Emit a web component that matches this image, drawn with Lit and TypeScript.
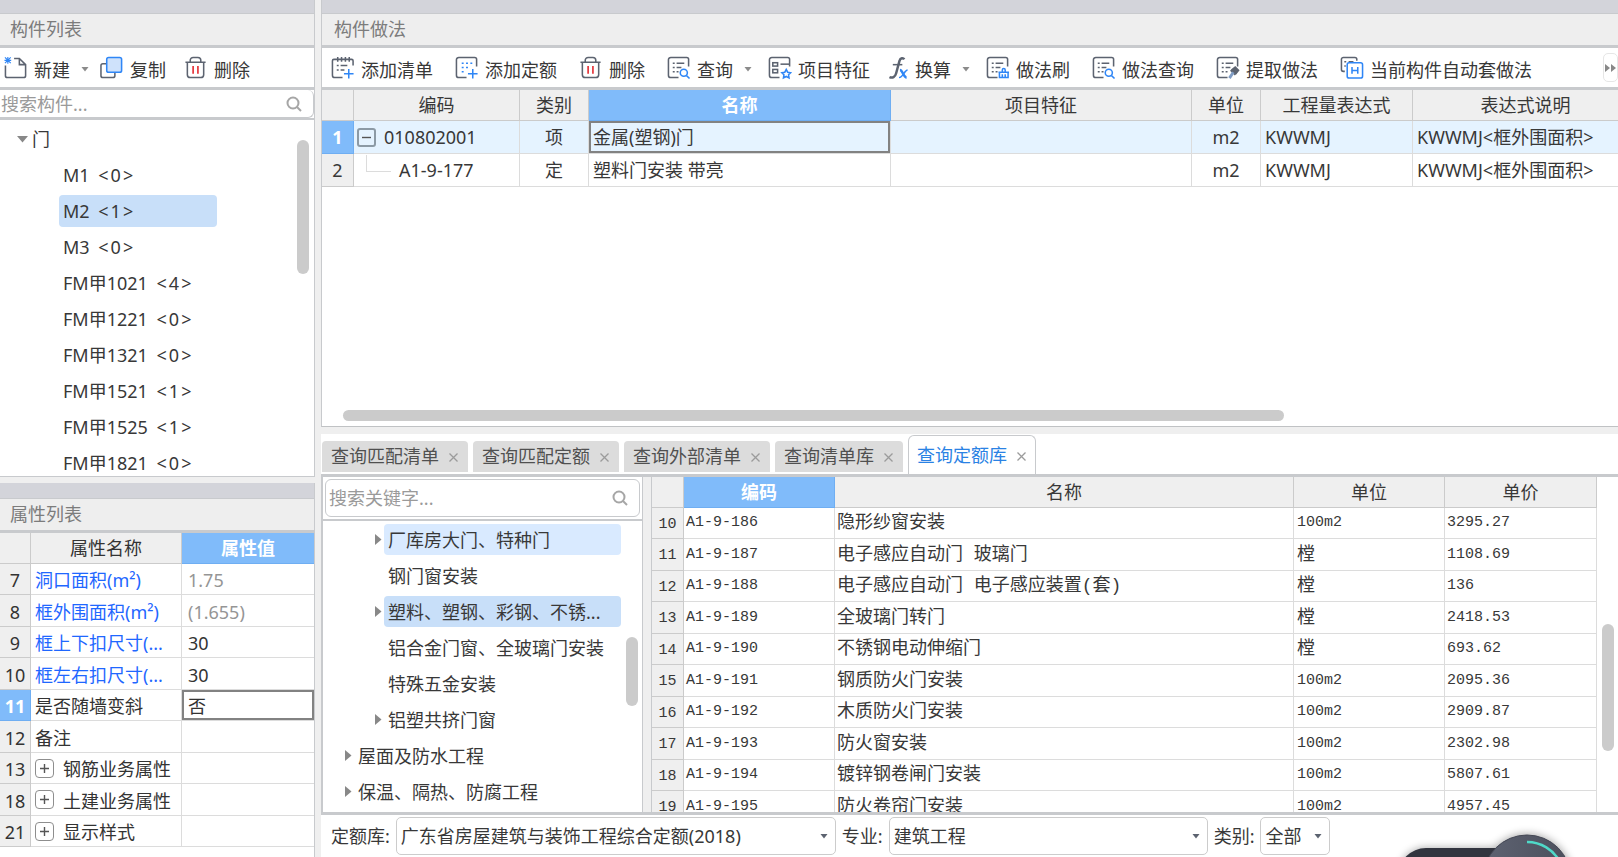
import { LitElement, html, css, svg, nothing } from "lit";
import { customElement, state } from "lit/decorators.js";
import { classMap } from "lit/directives/class-map.js";

const frame = svg`<path d="M12 22.500H4a2.500 2.500 0 0 1-2.500-2.500V4A2.500 2.500 0 0 1 4 1.500h16.500a2 2 0 0 1 2 2V11"/>`;
const lines = svg`<path d="M6 7.500h2M10 7.500h8M6 12h2M10 12h5M6 16.500h2M10 16.500h2"/>`;

const icons: Record<string, unknown> = {
  create: svg`<path d="M10.500 2.500H16l6.500 6.500v11.500a2 2 0 0 1-2 2H3.500a2 2 0 0 1-2-2V10M16 2.500V9h6.500"/>
    <g class="blue thin"><path d="M4 1v7M.500 4.500h7M1 1.500l6 6M7 1.500l-6 6"/></g>`,
  copy: svg`<path d="M7 8H3a2 2 0 0 0-2 2v10.500a2 2 0 0 0 2 2h10.500a2 2 0 0 0 2-2V17"/>
    <rect class="blue pale" x="7" y="1.500" width="15.500" height="15.500" rx="2"/>`,
  remove: svg`<path d="M1.500 6.500h21M6.500 6V4.500a3 3 0 0 1 3-3h5a3 3 0 0 1 3 3V6M3.500 7v12.500a3 3 0 0 0 3 3h11a3 3 0 0 0 3-3V7"/>
    <path class="red" d="M9.500 10.500v8M14.500 10.500v8"/>`,
  addList: svg`<path d="M4 3.500H3a1.500 1.500 0 0 0-1.500 1.500v15A2.500 2.500 0 0 0 4 22.500h8M20 3.500h1.500A1.500 1.500 0 0 1 23 5v5M7 1v5M11 1v5M15 1v5M19 1v5M4 3.500h16"/>
    <path d="M6 10h2M10 10h7M6 14.500h2M10 14.500h4"/>
    <path class="blue" d="M18.500 13.500v10M13.500 18.500h10"/>`,
  addQuota: svg`${frame}<path class="blue" d="M7 7.500h2M11.500 7.500h2M16 7.500h2M7 12h2M11.500 12h2M7 16.500h2"/>
    <path class="blue" d="M18.500 13.500v10M13.500 18.500h10"/>`,
  search: svg`${frame}${lines}<circle class="blue" cx="17.500" cy="17.500" r="3.700"/><path class="blue" d="M20.300 20.500l3.200 3"/>`,
  feature: svg`${frame}<rect x="5" y="7" width="5" height="3.500"/><rect x="5" y="14" width="5" height="3.500"/><path d="M13 8.500h9"/>
    <path class="blue" d="M19 14l1.500 2.900 3.100.500-2.200 2.200.500 3.200-2.900-1.500-2.900 1.500.500-3.200-2.200-2.200 3.100-.500z"/>`,
  formula: svg`<path class="bold" d="M20 3.500c-1-2-4-2-5 1.500L11.500 18c-1 4-4 5.500-7 4"/><path d="M8 9h10"/>
    <path class="blue bold" d="M15.500 14.500c3 0 3.500 8 7 8"/><path class="blue" d="M23.500 14.500c-3 0-5 8-9 8"/>`,
  brush: svg`${frame}${lines}<path class="blue" d="M14 17v5.500h9V17zM13 17h11M17 16.500v-2a1.500 1.500 0 0 1 3 0v2M17 19v3.500M20 19v3.500"/>`,
  extract: svg`${frame}${lines}<path class="fill" d="M17 14l3-2.500 3.500 3.500-2.500 3z"/><path class="bold" d="M15.500 14.500l5 5"/><path class="steel" d="M18 17l-4 6"/>`,
  auto: svg`<path d="M5 16H3.500a2 2 0 0 1-2-2V3.500a2 2 0 0 1 2-2h12a2 2 0 0 1 2 2V5M4.500 6h2M9 6h5M4.500 10.500H6"/>
    <rect class="blue" x="7.500" y="7" width="16" height="16" rx="2"/><path class="blue" d="M12.500 11.500v7M18.500 11.500v7M12.500 15h6"/>`,
};

const icon = (name: string) => {
  const slim = name === "formula";
  return html`<svg class=${slim ? "icon slim" : "icon"} viewBox=${slim ? "4 0 21 25" : "0 0 25 25"} aria-hidden="true">${icons[name]}</svg>`;
};
const caret = html`<svg class="caret" viewBox="0 0 8 5" aria-hidden="true"><path d="M.500 0h7L4 4.500z" /></svg>`;
const lens = html`<svg class="lens" viewBox="0 0 16 16" aria-hidden="true"><circle cx="7" cy="7" r="5.500" /><path d="M11 11l4 4" /></svg>`;

const tools: [string, string, boolean?][] = [
  ["addList", "添加清单"], ["addQuota", "添加定额"], ["remove", "删除"], ["search", "查询", true],
  ["feature", "项目特征"], ["formula", "换算", true], ["brush", "做法刷"], ["search", "做法查询"],
  ["extract", "提取做法"], ["auto", "当前构件自动套做法"],
];

const parts: [string, number][] = [
  ["M1", 0], ["M2", 1], ["M3", 0], ["FM甲1021", 4], ["FM甲1221", 0],
  ["FM甲1321", 0], ["FM甲1521", 1], ["FM甲1525", 1], ["FM甲1821", 0],
];

interface Property { no: number; name: string; value?: string; tone?: string; muted?: boolean; group?: boolean; }
const properties: Property[] = [
  { no: 7, name: "洞口面积(m²)", value: "1.75", tone: "link", muted: true },
  { no: 8, name: "框外围面积(m²)", value: "(1.655)", tone: "link", muted: true },
  { no: 9, name: "框上下扣尺寸(...", value: "30", tone: "link" },
  { no: 10, name: "框左右扣尺寸(...", value: "30", tone: "link" },
  { no: 11, name: "是否随墙变斜", value: "否" },
  { no: 12, name: "备注" },
  { no: 13, name: "钢筋业务属性", group: true },
  { no: 18, name: "土建业务属性", group: true },
  { no: 21, name: "显示样式", group: true },
];

const tabs = ["查询匹配清单", "查询匹配定额", "查询外部清单", "查询清单库", "查询定额库"];

interface Chapter { name: string; depth: number; open?: boolean; mark?: string; }
const chapters: Chapter[] = [
  { name: "厂库房大门、特种门", depth: 2, open: true, mark: "hover" },
  { name: "钢门窗安装", depth: 2 },
  { name: "塑料、塑钢、彩钢、不锈...", depth: 2, open: true, mark: "chosen" },
  { name: "铝合金门窗、全玻璃门安装", depth: 2 },
  { name: "特殊五金安装", depth: 2 },
  { name: "铝塑共挤门窗", depth: 2, open: true },
  { name: "屋面及防水工程", depth: 1, open: true },
  { name: "保温、隔热、防腐工程", depth: 1, open: true },
];

const quotas: [number, string, string, string, string][] = [
  [10, "A1-9-186", "隐形纱窗安装", "100m2", "3295.27"],
  [11, "A1-9-187", "电子感应自动门 玻璃门", "樘", "1108.69"],
  [12, "A1-9-188", "电子感应自动门 电子感应装置(套)", "樘", "136"],
  [13, "A1-9-189", "全玻璃门转门", "樘", "2418.53"],
  [14, "A1-9-190", "不锈钢电动伸缩门", "樘", "693.62"],
  [15, "A1-9-191", "钢质防火门安装", "100m2", "2095.36"],
  [16, "A1-9-192", "木质防火门安装", "100m2", "2909.87"],
  [17, "A1-9-193", "防火窗安装", "100m2", "2302.98"],
  [18, "A1-9-194", "镀锌钢卷闸门安装", "100m2", "5807.61"],
  [19, "A1-9-195", "防火卷帘门安装", "100m2", "4957.45"],
];

@customElement("app-root")
export class AppRoot extends LitElement {
  @state() private part = 1;
  @state() private tab = 4;

  static styles = css`
    :host {
      display: grid;
      grid-template-columns: 315px minmax(0, 1fr);
      gap: 6px;
      height: 100vh;
      position: relative;
      overflow: hidden;
      background: #efefef;
      color: #383838;
      font: 18px/24px "Noto Sans", "Noto Sans CJK SC", sans-serif;
    }
    * { box-sizing: border-box; }
    button, input, select { font: inherit; color: inherit; margin: 0; }
    button { background: none; border: 0; padding: 0; white-space: nowrap; }
    ul { list-style: none; margin: 0; padding: 0; }
    .side, .main { display: flex; flex-direction: column; gap: 6px; min-width: 0; min-height: 0; }
    .main { gap: 7px; }
    .panel { display: flex; flex-direction: column; min-height: 0; background: #fff; }
    .side .panel { border-right: 1px solid #c8cacd; }
    .parts { flex: 1 1 0; border-bottom: 1px solid #c8cacd; overflow: hidden; }
    .props { flex: none; padding-bottom: 10px; }
    .works { flex: 426 1 0; border-left: 1px solid #c8cacd; border-bottom: 1px solid #c0c2c4; overflow: hidden; }
    .library { flex: 424 1 0; }
    .grip { flex: none; height: 13px; background: #d3d4da; }
    .props .grip { height: 15px; }
    h2 {
      flex: none;
      margin: 0;
      height: 35px;
      padding: 3px 10px 0 10px;
      border-top: 1px solid #c8cacd;
      border-bottom: 3px solid #c8cacd;
      background: #eee;
      color: #7c7c7c;
      font-size: 18px;
      font-weight: 400;
      line-height: 24px;
    }
    .works h2 { padding-left: 12px; }
    .bar { flex: none; display: flex; align-items: center; height: 42px; border-bottom: 3px solid #c8cacd; position: relative; }
    .bar button { display: flex; align-items: center; gap: 6px; padding: 4px 13px 0 9px; height: 36px; }
    .bar button.drop { padding-right: 7px; }
    .side .bar button { padding-left: 4px; padding-right: 8px; }
    .side .bar button + button { padding-left: 3px; padding-right: 15px; }
    .icon { width: 24px; height: 24px; margin-top: -4px; fill: none; stroke: #5c6370; stroke-width: 1.6; }
    .icon.slim { width: 20px; margin-left: -3px; }
    .icon .blue { stroke: #2f86f6; }
    .icon .thin { stroke-width: 1.2; }
    .icon .pale { fill: #cfe2fb; }
    .icon .red { stroke: #e5393f; stroke-width: 1.8; }
    .icon .bold { stroke-width: 2.6; }
    .icon .fill { fill: #5c6370; }
    .icon .steel { stroke: #7f9cc4; stroke-width: 3; }
    .caret { width: 8px; height: 5px; margin-left: 5px; fill: #8b8b8b; }
    .bar .more {
      position: absolute;
      right: 0;
      top: 5px;
      width: 15px;
      height: 29px;
      padding: 0;
      justify-content: center;
      background: #fff;
      border: 1px solid #e6e6e6;
      border-radius: 5px;
    }
    .more svg { width: 11px; height: 8px; fill: #888; }
    .find { display: flex; align-items: center; flex: none; background: #fff; border: 1px solid #c8cacd; border-radius: 6px; }
    .find input { flex: 1; min-width: 0; border: 0; outline: 0; padding: 0; background: none; height: 24px; }
    .find input::placeholder { color: #9a9a9a; opacity: 1; }
    .lens { width: 16px; height: 16px; fill: none; stroke: #a6a6a6; stroke-width: 2; }
    .parts .find { height: 28px; border-left: 0; border-top: 0; padding-right: 11px; padding-left: 1px; border-radius: 0 6px 6px 0; }
    .treebox { flex: 1; min-height: 0; position: relative; overflow: hidden; border-top: 2px solid #c8cacd; padding-top: 1px; }
    .row { display: flex; align-items: center; height: 36px; }
    .row .label { display: flex; gap: 4px; height: 32px; align-items: center; padding: 0 4px; border-radius: 4px; white-space: pre; }
    .root { padding-left: 17px; }
    .root svg { width: 11px; height: 7px; fill: #888; }
    .leaf { padding-left: 59px; }
    .leaf .label { width: 158px; }
    .count { display: flex; gap: 2px; }
    .label.chosen { background: #c8dff9; }
    .label.hover { background: #d9eaff; }
    .thumb { position: absolute; width: 12px; border-radius: 6px; background: #cbcbcb; }
    .parts .thumb { right: 5px; top: 20px; height: 134px; }

    table { border-collapse: separate; border-spacing: 0; table-layout: fixed; width: 100%; }
    th, td { height: 31px; padding: 0 4px; border-right: 1px solid #dcdcdc; border-bottom: 1px solid #dcdcdc; text-align: left; font-weight: 400; white-space: nowrap; overflow: hidden; line-height: 24px; }
    thead th, tbody th { background: #efefef; text-align: center; border-color: #cbcbcb; padding: 0; }
    tr:nth-child(even) > td, tbody tr:nth-child(even) > th { height: 32px; }
    thead th.active, tbody th.active { background: #80bbfa; border-color: #6faef2; color: #fff; font-weight: 700; }
    td.mid { text-align: center; }
    .props td:last-child, .props th:last-child { border-right: 0; }
    .props tbody td, .props tbody th { padding-top: 2px; }
    .props td:last-child { padding-left: 6px; }
    .props table { color: #333; }
    .n30 { width: 31px; }
    .n151 { width: 151px; }
    td.link { color: #1f67ff; }
    td.muted { color: #959595; }
    td.focus { box-shadow: inset 0 0 0 2px #828282; }
    .toggle { display: inline-grid; place-items: center; width: 19px; height: 19px; border: 1px solid #8e8e8e; border-radius: 4px; background: #fff; vertical-align: middle; }
    .toggle svg { width: 9px; height: 9px; stroke: #555; stroke-width: 1.4; }
    .props .toggle { margin: -6px 9px 0 0; }
    .scroller { flex: 1; min-height: 0; overflow: hidden; }
    .works table { width: 1317px; min-width: 100%; }
    .works tbody td, .works tbody tr th { height: 33px; }
    .works .current td { background: #e5f3ff; }
    .works .toggle { margin: -3px 8px 0 -1px; background: none; border-width: 2px; border-color: #8c9aa5; border-radius: 3px; }
    .branch { display: inline-block; width: 25px; height: 17px; margin: -17px 8px 0 8px; border: solid #dcdcdc; border-width: 0 0 1px 1px; vertical-align: middle; }
    .w32 { width: 32px; } .w166 { width: 166px; } .w69 { width: 69px; } .w302 { width: 302px; }
    .w301 { width: 301px; } .w152 { width: 152px; } .w151 { width: 151px; }
    .track { flex: none; height: 16px; padding: 0 334px 5px 21px; }
    .track div { height: 11px; border-radius: 6px; background: #cbcbcb; }

    .tabs { flex: none; display: flex; align-items: flex-end; gap: 5px; height: 43px; padding-left: 1px; border-bottom: 3px solid #c8cacd; }
    .tabs button { display: flex; align-items: center; gap: 10px; height: 31px; margin-bottom: 2px; padding: 0 9px; border-radius: 4px 4px 0 0; background: #dcdcdc; color: #505050; }
    .tabs button.on { height: 39px; margin-bottom: 0; padding: 0 8px; background: #fff; color: #2a82e4; border: 1px solid #c8cacd; border-bottom: 0; border-radius: 6px 6px 0 0; }
    .cross { width: 9px; height: 9px; stroke: #9b9b9b; stroke-width: 1.3; margin: 3px 1px 0 0; }
    .body { flex: 1; min-height: 0; display: flex; gap: 8px; background: #efefef; border-bottom: 3px solid #c8cacd; }
    .chapters { flex: none; width: 322px; display: flex; flex-direction: column; background: #fff; border: solid #c8cacd; border-width: 0 1px 0 2px; }
    .chapters .find { margin: 2px; height: 38px; padding: 0 11px 0 3px; border-width: 1px; }
    .arrow { width: 7px; height: 11px; fill: #888; margin-right: 3px; }
    .arrow.none { visibility: hidden; }
    .d2 { padding-left: 52px; }
    .d1 { padding-left: 22px; }
    .d2 .label { width: 237px; padding-right: 0; }
    .chapters .label { margin-left: -1px; height: 31px; }
    .chapters .thumb { right: 4px; top: 116px; height: 69px; }
    .grid { flex: 1; min-width: 0; display: flex; overflow: hidden; background: #fff; border-left: 1px solid #c8cacd; }
    .rail { flex: none; width: 21px; padding: 147px 3px 0 5px; }
    .rail div { width: 12px; height: 127px; border-radius: 6px; background: #cbcbcb; }
    .quotas { font-family: "Liberation Mono", "Noto Sans CJK SC", monospace; }
    .quotas thead { font-family: "Noto Sans", "Noto Sans CJK SC", sans-serif; }
    .quotas td { padding: 1px 4px 0 2px; }
    .quotas tbody th { font-size: 15px; padding-top: 4px; }
    .quotas .code { font-size: 15px; }
    .quotas .unit { padding-left: 3px; }
    .foot { flex: none; display: flex; align-items: center; height: 42px; padding: 0 0 0 10px; }
    .foot label { white-space: nowrap; }
    .pick { display: grid; align-items: center; height: 38px; margin: 0 10px 0 7px; }
    .pick > * { grid-area: 1 / 1; }
    .pick select { appearance: none; width: 100%; height: 38px; padding: 0 4px; border: 1px solid #ccc; border-radius: 5px; background: #fff; outline: 0; }
    .pick .caret { justify-self: end; margin-right: 8px; fill: #5c6370; pointer-events: none; }
    .wide { flex: 0 1 440px; margin: 0 6px; }
    .middle { flex: 0 1 319px; margin: 0 6px; }
    .small { flex: 0 0 70px; margin: 0 6px; }
    .orb { position: absolute; right: 40px; bottom: 0; width: 190px; height: 32px; }
  `;

  private tool([name, text, drop]: [string, string, boolean?]) {
    return html`<button type="button" class=${classMap({ drop: !!drop })}>${icon(name)}<span>${text}</span>${drop ? caret : nothing}</button>`;
  }

  private renderParts() {
    return html`<section class="panel parts">
      <div class="grip"></div>
      <h2>构件列表</h2>
      <div class="bar">${this.tool(["create", "新建", true])}${this.tool(["copy", "复制"])}${this.tool(["remove", "删除"])}</div>
      <div class="find"><input type="text" aria-label="搜索构件" placeholder="搜索构件..." />${lens}</div>
      <div class="treebox">
        <ul>
          <li class="row root"><svg viewBox="0 0 11 7"><path d="M0 0h11L5.500 6.500z" /></svg><span class="label">门</span></li>
          ${parts.map(([name, count], i) => html`<li class="row leaf">
            <button type="button" class=${classMap({ label: true, chosen: i === this.part })} @click=${() => (this.part = i)}>
              <span>${name} </span><span class="count"><span>&lt;</span><span>${count}</span><span>&gt;</span></span>
            </button>
          </li>`)}
        </ul>
        <div class="thumb"></div>
      </div>
    </section>`;
  }

  private renderProps() {
    return html`<section class="panel props">
      <div class="grip"></div>
      <h2>属性列表</h2>
      <table>
        <colgroup><col class="n30" /><col class="n151" /><col /></colgroup>
        <thead><tr><th></th><th>属性名称</th><th class="active">属性值</th></tr></thead>
        <tbody>
          ${properties.map((p) => html`<tr>
            <th class=${classMap({ active: p.no === 11 })}>${p.no}</th>
            <td class=${p.tone ?? ""}>${p.group ? html`<button type="button" class="toggle" aria-label="展开"><svg viewBox="0 0 9 9"><path d="M0 4.500h9M4.500 0v9" /></svg></button>` : nothing}${p.name}</td>
            <td class=${classMap({ muted: !!p.muted, focus: p.no === 11 })}>${p.value ?? ""}</td>
          </tr>`)}
        </tbody>
      </table>
    </section>`;
  }

  private renderWorks() {
    return html`<section class="panel works">
      <div class="grip"></div>
      <h2>构件做法</h2>
      <div class="bar">
        ${tools.map((t) => this.tool(t))}
        <button type="button" class="more" aria-label="更多"><svg viewBox="0 0 11 8"><path d="M0 0l5 4-5 4zM6 0l5 4-5 4z" /></svg></button>
      </div>
      <div class="scroller">
        <table>
          <colgroup><col class="w32" /><col class="w166" /><col class="w69" /><col class="w302" /><col class="w301" /><col class="w69" /><col class="w152" /><col /></colgroup>
          <thead><tr><th></th><th>编码</th><th>类别</th><th class="active">名称</th><th>项目特征</th><th>单位</th><th>工程量表达式</th><th>表达式说明</th></tr></thead>
          <tbody>
            <tr class="current">
              <th class="active">1</th>
              <td><button type="button" class="toggle" aria-label="收起"><svg viewBox="0 0 9 9"><path d="M0 4.500h9" /></svg></button>010802001</td>
              <td class="mid">项</td><td class="focus">金属(塑钢)门</td><td></td><td class="mid">m2</td><td>KWWMJ</td><td>KWWMJ&lt;框外围面积&gt;</td>
            </tr>
            <tr>
              <th>2</th>
              <td><span class="branch"></span>A1-9-177</td>
              <td class="mid">定</td><td>塑料门安装 带亮</td><td></td><td class="mid">m2</td><td>KWWMJ</td><td>KWWMJ&lt;框外围面积&gt;</td>
            </tr>
          </tbody>
        </table>
      </div>
      <div class="track"><div></div></div>
    </section>`;
  }

  private renderLibrary() {
    return html`<section class="panel library">
      <div class="tabs" role="tablist">
        ${tabs.map((t, i) => html`<button type="button" role="tab" aria-selected=${i === this.tab} class=${classMap({ on: i === this.tab })} @click=${() => (this.tab = i)}>
          ${t}<svg class="cross" viewBox="0 0 9 9"><path d="M.500.500l8 8M8.500.500l-8 8" /></svg></button>`)}
      </div>
      <div class="body">
        <div class="chapters">
          <div class="find"><input type="text" aria-label="搜索关键字" placeholder="搜索关键字..." />${lens}</div>
          <div class="treebox">
            <ul>
              ${chapters.map((c) => html`<li class="row d${c.depth}">
                <svg class="arrow ${c.open ? "" : "none"}" viewBox="0 0 7 11"><path d="M0 0l6.500 5.500L0 11z" /></svg>
                <button type="button" class="label ${c.mark ?? ""}">${c.name}</button>
              </li>`)}
            </ul>
            <div class="thumb"></div>
          </div>
        </div>
        <div class="grid">
          <div class="scroller">
            <table class="quotas">
              <colgroup><col class="w32" /><col class="w151" /><col /><col class="w151" /><col class="w152" /></colgroup>
              <thead><tr><th></th><th class="active">编码</th><th>名称</th><th>单位</th><th>单价</th></tr></thead>
              <tbody>
                ${quotas.map(([no, code, name, unit, price]) => html`<tr>
                  <th>${no}</th><td class="code">${code}</td><td>${name}</td>
                  <td class=${classMap({ unit: true, code: unit !== "樘" })}>${unit}</td><td class="code">${price}</td>
                </tr>`)}
              </tbody>
            </table>
          </div>
          <div class="rail"><div></div></div>
        </div>
      </div>
      <div class="foot">
        <label for="lib">定额库:</label>
        <span class="pick wide"><select id="lib"><option>广东省房屋建筑与装饰工程综合定额(2018)</option></select>${caret}</span>
        <label for="field">专业:</label>
        <span class="pick middle"><select id="field"><option>建筑工程</option></select>${caret}</span>
        <label for="kind">类别:</label>
        <span class="pick small"><select id="kind"><option>全部</option></select>${caret}</span>
      </div>
    </section>`;
  }

  render() {
    return html`
      <div class="side">${this.renderParts()}${this.renderProps()}</div>
      <div class="main">${this.renderWorks()}${this.renderLibrary()}</div>
      <svg class="orb" viewBox="0 0 190 32" aria-hidden="true">
        <defs>
          <filter id="soft" x="-20%" y="-40%" width="140%" height="180%"><feGaussianBlur stdDeviation="4" /></filter>
          <linearGradient id="slate" x1="0" y1="0" x2="1" y2="0"><stop offset="0" stop-color="#5e6372" /><stop offset="1" stop-color="#4b4f5c" /></linearGradient>
        </defs>
        <g filter="url(#soft)" opacity=".35"><rect x="12" y="23" width="160" height="50" rx="25" /><circle cx="139" cy="54" r="45" /></g>
        <rect x="10" y="23" width="150" height="56" rx="28" fill="#32353f" />
        <circle cx="139" cy="54" r="44" fill="url(#slate)" stroke="#444855" />
        <path d="M139 17a37 37 0 0 1 33 20" fill="none" stroke="#4fd9c8" stroke-width="2.500" />
      </svg>`;
  }
}
